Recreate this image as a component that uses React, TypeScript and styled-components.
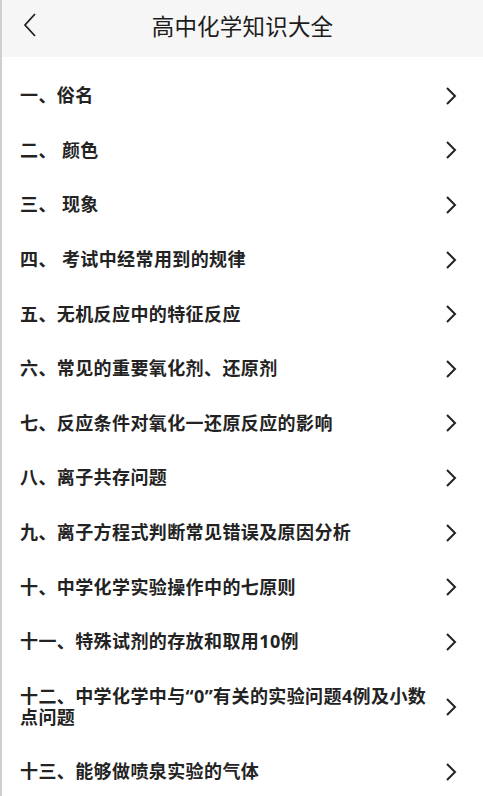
import React from 'react';
import styled, { createGlobalStyle } from 'styled-components';

const GlobalStyle = createGlobalStyle`
  html, body {
    margin: 0;
    padding: 0;
    background: #fff;
  }
  body {
    font-family: "Noto Sans CJK SC", "Noto Sans", sans-serif;
  }
`;

const Page = styled.div`
  width: 483px;
  min-height: 796px;
  box-sizing: border-box;
  border-left: 2px solid #cfcfcf;
  background: #fff;
`;

const Header = styled.header`
  height: 57px;
  box-sizing: border-box;
  padding-bottom: 8px;
  display: grid;
  grid-template-columns: 60px 1fr 60px;
  align-items: center;
  background: #f6f6f6;
`;

const BackButton = styled.button`
  border: none;
  background: none;
  padding: 0 0 0 20px;
  display: flex;
  align-items: center;
  height: 100%;
  cursor: pointer;
`;

const Title = styled.h1`
  margin: 0;
  text-align: center;
  font-size: 22.5px;
  font-weight: 400;
  color: #1c1c1c;
  letter-spacing: 0.2px;
`;

const List = styled.ul`
  list-style: none;
  margin: 0;
  padding: 11.5px 0 0;
`;

const Row = styled.li`
  display: flex;
  align-items: center;
  justify-content: space-between;
  gap: 8px;
  padding: 16.8px 26px 16.8px 18px;
`;

const Label = styled.span`
  font-family: "Noto Sans", "Noto Sans CJK SC", sans-serif;
  font-size: 18px;
  line-height: 21px;
  letter-spacing: 0.4px;
  font-weight: 700;
  color: #232323;
`;

const Chevron = styled.svg`
  flex-shrink: 0;
  width: 12px;
  height: 20px;
`;

const items = [
  '一、俗名',
  '二、 颜色',
  '三、 现象',
  '四、 考试中经常用到的规律',
  '五、无机反应中的特征反应',
  '六、常见的重要氧化剂、还原剂',
  '七、反应条件对氧化一还原反应的影响',
  '八、离子共存问题',
  '九、离子方程式判断常见错误及原因分析',
  '十、中学化学实验操作中的七原则',
  '十一、特殊试剂的存放和取用10例',
  '十二、中学化学中与“0”有关的实验问题4例及小数点问题',
  '十三、能够做喷泉实验的气体',
];

const App = () => (
  <Page>
    <GlobalStyle />
    <Header>
      <BackButton aria-label="back">
        <svg width="16" height="26" viewBox="0 0 16 26">
          <path d="M13 2 L3 13 L13 24" fill="none" stroke="#222" strokeWidth="1.8" />
        </svg>
      </BackButton>
      <Title>高中化学知识大全</Title>
      <span />
    </Header>
    <List>
      {items.map((text) => (
        <Row key={text}>
          <Label>{text}</Label>
          <Chevron viewBox="0 0 12 20">
            <path d="M2 2 L10 10 L2 18" fill="none" stroke="#222" strokeWidth="2" />
          </Chevron>
        </Row>
      ))}
    </List>
  </Page>
);

export default App;
